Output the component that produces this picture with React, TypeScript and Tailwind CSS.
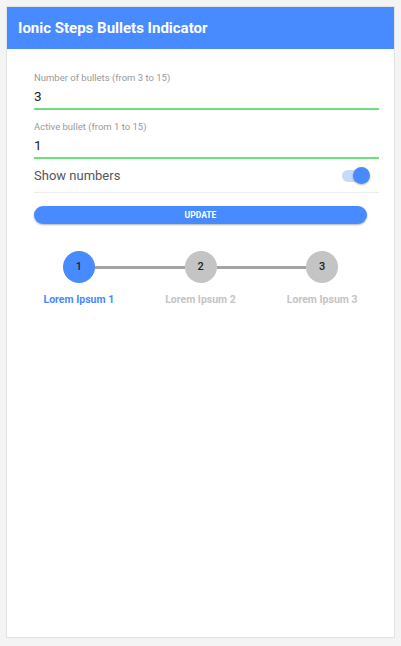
import React from "react";

const STEPS = ["Lorem Ipsum 1", "Lorem Ipsum 2", "Lorem Ipsum 3"];
const ACTIVE = 0;

function Field({ label, value }: { label: string; value: string }) {
  return (
    <div className="flex flex-col pt-[10px]">
      <span className="text-[9.5px] leading-[13px] text-[#999]">{label}</span>
      <span className="mt-[3px] pb-[3px] text-[13.5px] leading-[18px] text-[#222]">{value}</span>
      <div className="h-[2px] bg-[#6ee07f]" />
    </div>
  );
}

export default function App() {
  return (
    <div
      className="min-h-[646px] bg-[#f4f4f4] px-[6px] pt-[6px] pb-[8px]"
      style={{ fontFamily: "Roboto, 'Noto Sans', sans-serif" }}
    >
      <div className="flex h-[632px] flex-col border border-[#e2e2e2] bg-white">
        <div className="flex h-[42px] items-center bg-[#488aff] px-[11px]">
          <span className="text-[15px] font-bold text-white">Ionic Steps Bullets Indicator</span>
        </div>

        <div className="flex flex-col pl-[27px] pr-[15px] pt-[12px]">
          <Field label="Number of bullets (from 3 to 15)" value="3" />
          <Field label="Active bullet (from 1 to 15)" value="1" />
          <div className="flex h-[34px] items-center justify-between border-b border-[#ececec]">
            <span className="text-[13px] text-[#555]">Show numbers</span>
            <div className="relative mr-[11px] h-[12px] w-[26px] rounded-full bg-[#c7dafd]">
              <div className="absolute right-[-2px] top-[-2.5px] h-[17px] w-[17px] rounded-full bg-[#488aff] shadow-[0_1px_2px_rgba(0,0,0,0.3)]" />
            </div>
          </div>
          <button className="mt-[13px] mr-[12px] flex h-[18px] items-center justify-center rounded-full bg-[#488aff] text-[8.5px] font-bold text-white shadow-[0_1px_2px_rgba(0,0,0,0.3)]">
            UPDATE
          </button>
        </div>

        <div className="mt-[27px] flex px-[11px]">
          {STEPS.map((s, i) => (
            <div key={s} className="flex w-[122px] flex-col items-center">
              <div className="flex w-full items-center">
                <div className={`h-[3px] flex-1 ${i === 0 ? "" : "bg-[#a4a4a4]"}`} />
                <div
                  className={`flex h-[32px] w-[32px] items-center justify-center rounded-full text-[11px] font-medium text-[#222] ${
                    i === ACTIVE ? "bg-[#488aff]" : "bg-[#c4c4c4]"
                  }`}
                >
                  {i + 1}
                </div>
                <div className={`h-[3px] flex-1 ${i === STEPS.length - 1 ? "" : "bg-[#a4a4a4]"}`} />
              </div>
              <span
                className={`mt-[9px] text-[10.5px] font-bold ${i === ACTIVE ? "text-[#488aff]" : "text-[#c4c4c4]"}`}
              >
                {s}
              </span>
            </div>
          ))}
        </div>
      </div>
    </div>
  );
}
